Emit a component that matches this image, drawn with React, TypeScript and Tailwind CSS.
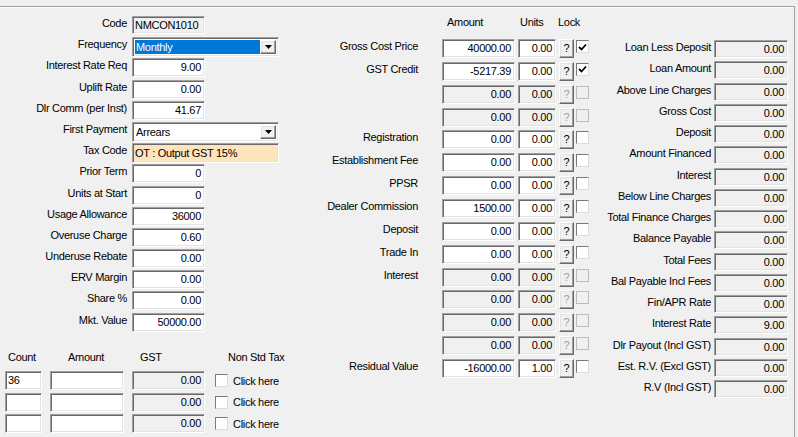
import React from "react";

const sunken =
  "border border-t-[#a0a0a0] border-l-[#a0a0a0] border-b-white border-r-white shadow-[inset_1px_1px_0_#696969,inset_-1px_-1px_0_#e3e3e3]";
const raised =
  "border border-t-white border-l-white border-b-[#696969] border-r-[#696969] shadow-[inset_-1px_-1px_0_#a0a0a0,inset_1px_1px_0_#e3e3e3]";

function Field({
  value = "",
  w,
  disabled = false,
  left = false,
  h = "h-[19px]",
}: {
  value?: string;
  w: string;
  disabled?: boolean;
  left?: boolean;
  h?: string;
}) {
  return (
    <div
      className={`${w} ${h} ${sunken} ${disabled ? "bg-[#f0f0f0]" : "bg-white"} ${
        left ? "text-left pl-[2px]" : "text-right pr-[3px]"
      } leading-[17px] whitespace-nowrap overflow-hidden`}
    >
      {value}
    </div>
  );
}

function Arrow() {
  return (
    <svg width="7" height="4" viewBox="0 0 7 4">
      <polygon points="0,0 7,0 3.5,4" fill="#000" />
    </svg>
  );
}

function Select({ value, selected = false }: { value: string; selected?: boolean }) {
  return (
    <div className={`w-[147px] h-[20px] ${sunken} bg-white flex items-stretch p-[2px]`}>
      <div
        className={`flex-1 pl-[1px] leading-[15px] ${
          selected ? "bg-[#0078d7] text-white" : "text-black"
        }`}
      >
        {value}
      </div>
      <div className={`w-[16px] ${raised} bg-[#f0f0f0] flex items-center justify-center`}>
        <Arrow />
      </div>
    </div>
  );
}

function Check({ checked = false, disabled = false }: { checked?: boolean; disabled?: boolean }) {
  return (
    <div
      className={`w-[13px] h-[13px] border ${
        disabled ? "border-[#bcbcbc] bg-[#f0f0f0]" : "border-t-[#7a7a7a] border-l-[#7a7a7a] border-b-[#dcdcdc] border-r-[#dcdcdc] bg-white"
      } flex items-center justify-center`}
    >
      {checked && (
        <svg width="9" height="8" viewBox="0 0 9 8">
          <polyline points="1,4 3.5,6.5 8,1.5" fill="none" stroke="#000" strokeWidth="1.8" />
        </svg>
      )}
    </div>
  );
}

function Help({ disabled = false }: { disabled?: boolean }) {
  return (
    <div
      className={`w-[15px] h-[19px] ${raised} bg-[#f0f0f0] flex items-center justify-center leading-none ${
        disabled ? "text-[#a0a0a0]" : "text-black"
      }`}
    >
      ?
    </div>
  );
}

const leftRows: { label: string; el: React.ReactNode }[] = [
  { label: "Code", el: <Field value="NMCON1010" w="w-[73px]" h="h-[18px]" disabled left /> },
  { label: "Frequency", el: <Select value="Monthly" selected /> },
  { label: "Interest Rate Req", el: <Field value="9.00" w="w-[73px]" /> },
  { label: "Uplift Rate", el: <Field value="0.00" w="w-[73px]" /> },
  { label: "Dlr Comm (per Inst)", el: <Field value="41.67" w="w-[73px]" /> },
  { label: "First Payment", el: <Select value="Arrears" /> },
  {
    label: "Tax Code",
    el: (
      <div className={`w-[147px] h-[20px] ${sunken} bg-[#fee4bd] pl-[2px] leading-[18px]`}>
        OT : Output GST 15%
      </div>
    ),
  },
  { label: "Prior Term", el: <Field value="0" w="w-[73px]" /> },
  { label: "Units at Start", el: <Field value="0" w="w-[73px]" /> },
  { label: "Usage Allowance", el: <Field value="36000" w="w-[73px]" /> },
  { label: "Overuse Charge", el: <Field value="0.60" w="w-[73px]" /> },
  { label: "Underuse Rebate", el: <Field value="0.00" w="w-[73px]" /> },
  { label: "ERV Margin", el: <Field value="0.00" w="w-[73px]" /> },
  { label: "Share %", el: <Field value="0.00" w="w-[73px]" /> },
  { label: "Mkt. Value", el: <Field value="50000.00" w="w-[73px]" /> },
];

const midRows: { label: string; amount: string; units: string; off?: boolean; checked?: boolean }[] = [
  { label: "Gross Cost Price", amount: "40000.00", units: "0.00", checked: true },
  { label: "GST Credit", amount: "-5217.39", units: "0.00", checked: true },
  { label: "", amount: "0.00", units: "0.00", off: true },
  { label: "", amount: "0.00", units: "0.00", off: true },
  { label: "Registration", amount: "0.00", units: "0.00" },
  { label: "Establishment Fee", amount: "0.00", units: "0.00" },
  { label: "PPSR", amount: "0.00", units: "0.00" },
  { label: "Dealer Commission", amount: "1500.00", units: "0.00" },
  { label: "Deposit", amount: "0.00", units: "0.00" },
  { label: "Trade In", amount: "0.00", units: "0.00" },
  { label: "Interest", amount: "0.00", units: "0.00", off: true },
  { label: "", amount: "0.00", units: "0.00", off: true },
  { label: "", amount: "0.00", units: "0.00", off: true },
  { label: "", amount: "0.00", units: "0.00", off: true },
  { label: "Residual Value", amount: "-16000.00", units: "1.00" },
];

const rightRows: [string, string][] = [
  ["Loan Less Deposit", "0.00"],
  ["Loan Amount", "0.00"],
  ["Above Line Charges", "0.00"],
  ["Gross Cost", "0.00"],
  ["Deposit", "0.00"],
  ["Amount Financed", "0.00"],
  ["Interest", "0.00"],
  ["Below Line Charges", "0.00"],
  ["Total Finance Charges", "0.00"],
  ["Balance Payable", "0.00"],
  ["Total Fees", "0.00"],
  ["Bal Payable Incl Fees", "0.00"],
  ["Fin/APR Rate", "0.00"],
  ["Interest Rate", "9.00"],
  ["Dlr Payout (Incl GST)", "0.00"],
  ["Est. R.V. (Excl GST)", "0.00"],
  ["R.V (Incl GST)", "0.00"],
];

export default function App() {
  return (
    <div className="w-[798px] h-[437px] bg-[#f0f0f0] font-['Liberation_Sans',Arial,sans-serif] text-[11px] tracking-[-0.3px] text-black overflow-hidden">
      <div className="mt-[6px] w-[795px] h-[431px] border-t border-r border-[#a0a0a0] shadow-[inset_0_1px_0_#fff] flex">
        {/* left column */}
        <div className="w-[291px] pt-[9px]">
          <div className="grid auto-rows-[21.2px]">
            {leftRows.map((r) => (
              <div key={r.label} className="flex items-start">
                <div className="w-[127px] text-right leading-[15px] whitespace-nowrap">{r.label}</div>
                <div className="ml-[5px]">{r.el}</div>
              </div>
            ))}
          </div>
          <div className="mt-[16px] flex leading-[15px]">
            <span className="w-[68px] pl-[8px]">Count</span>
            <span className="w-[72px]">Amount</span>
            <span className="w-[88px]">GST</span>
            <span>Non Std Tax</span>
          </div>
          <div className="mt-[6.5px] flex flex-col gap-[2.5px]">
            {["36", "", ""].map((c, i) => (
              <div key={i} className="flex items-center pl-[5px]">
                <Field value={c} w="w-[37px]" left />
                <div className="ml-[8px]">
                  <Field w="w-[74px]" />
                </div>
                <div className="ml-[8px]">
                  <Field value="0.00" w="w-[73px]" disabled />
                </div>
                <div className="ml-[10px]">
                  <Check />
                </div>
                <span className="ml-[5px]">Click here</span>
              </div>
            ))}
          </div>
        </div>

        {/* middle column */}
        <div className="w-[301px] pt-[8px]">
          <div className="flex leading-[15px]">
            <span className="ml-[156px] w-[73px]">Amount</span>
            <span className="w-[38px]">Units</span>
            <span>Lock</span>
          </div>
          <div className="mt-[9px] grid auto-rows-[22.86px]">
            {midRows.map((r, i) => (
              <div key={i} className="flex items-start">
                <div className="w-[127px] text-right leading-[15px] whitespace-nowrap">{r.label}</div>
                <div className="ml-[24px]">
                  <Field value={r.amount} w="w-[73px]" disabled={r.off} />
                </div>
                <div className="ml-[3px]">
                  <Field value={r.units} w="w-[38px]" disabled={r.off} />
                </div>
                <div className="ml-[3px]">
                  <Help disabled={r.off} />
                </div>
                <div className="ml-[2px] mt-[1px]">
                  <Check checked={r.checked} disabled={r.off} />
                </div>
              </div>
            ))}
          </div>
        </div>

        {/* right column */}
        <div className="flex-1 pt-[33px]">
          <div className="grid auto-rows-[21.25px]">
            {rightRows.map(([label, v]) => (
              <div key={label} className="flex items-start">
                <div className="w-[119px] text-right leading-[15px] whitespace-nowrap">{label}</div>
                <div className="ml-[3px]">
                  <Field value={v} w="w-[74px]" h="h-[18px]" disabled />
                </div>
              </div>
            ))}
          </div>
        </div>
      </div>
    </div>
  );
}
